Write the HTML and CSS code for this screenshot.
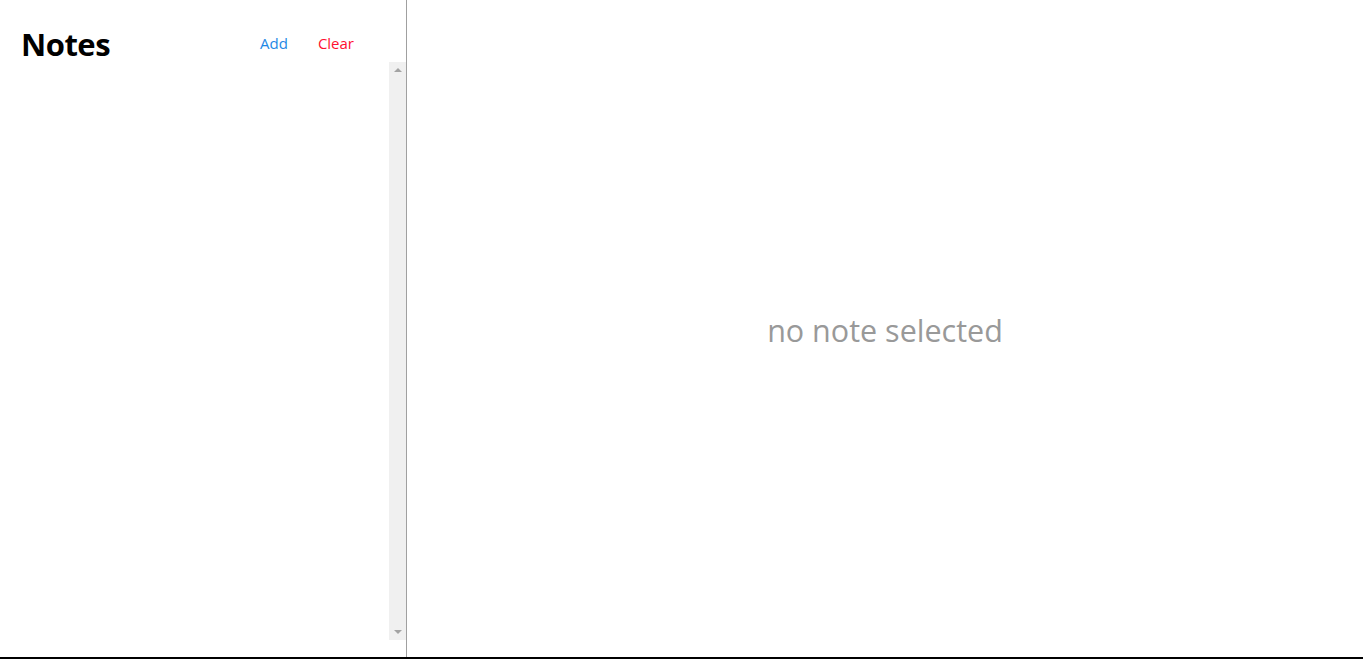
FILE: index.html
```html
<!DOCTYPE html>
<html>
<head>
<meta charset="utf-8">
<link rel="stylesheet" href="styles.css">
</head>
<body>
<div class="app">
  <aside class="sidebar">
    <header class="side-header">
      <h1 class="title">Notes</h1>
      <div class="actions">
        <button class="btn btn-add">Add</button>
        <button class="btn btn-clear">Clear</button>
      </div>
    </header>
    <div class="list-wrap">
      <ul class="note-list"></ul>
      <div class="scrollbar">
        <span class="arrow arrow-up"></span>
        <span class="track"></span>
        <span class="arrow arrow-down"></span>
      </div>
    </div>
  </aside>
  <main class="main">
    <p class="empty">no note selected</p>
  </main>
</div>
</body>
</html>
```
FILE: styles.css
```css
html, body {
  margin: 0;
  padding: 0;
  height: 100%;
}
body {
  font-family: "Open Sans", "Noto Sans", sans-serif;
  background: #fff;
}
.app {
  display: flex;
  height: 659px;
  box-sizing: border-box;
  border-bottom: 2px solid #000;
}
.sidebar {
  width: 406px;
  border-right: 1px solid #a0a0a0;
  display: flex;
  flex-direction: column;
  padding-bottom: 17px;
  box-sizing: content-box;
}
.side-header {
  height: 62px;
  display: flex;
  align-items: center;
  justify-content: space-between;
  padding: 26px 52px 0 21px;
  box-sizing: border-box;
}
.title {
  margin: 0;
  font-size: 31px;
  font-weight: 700;
  letter-spacing: -0.5px;
  color: #000;
}
.actions {
  display: flex;
  gap: 30px;
  padding-bottom: 2px;
}
.btn {
  border: none;
  background: none;
  padding: 0;
  font-family: inherit;
  font-size: 15px;
  cursor: pointer;
}
.btn-add { color: #1e88e5; }
.btn-clear { color: #ff1030; }
.list-wrap {
  flex: 1;
  display: flex;
  min-height: 0;
}
.note-list {
  flex: 1;
  margin: 0;
  padding: 0;
  list-style: none;
}
.scrollbar {
  width: 17px;
  background: #f0f0f0;
  display: flex;
  flex-direction: column;
  align-items: center;
}
.track { flex: 1; }
.arrow {
  width: 0;
  height: 0;
  border-left: 4px solid transparent;
  border-right: 4px solid transparent;
}
.arrow-up {
  border-bottom: 4px solid #a3a3a3;
  margin-top: 6px;
  margin-bottom: 7px;
}
.arrow-down {
  border-top: 4px solid #a3a3a3;
  margin-top: 7px;
  margin-bottom: 6px;
}
.main {
  flex: 1;
  display: flex;
  align-items: center;
  justify-content: center;
}
.empty {
  margin: 0;
  font-size: 30.5px;
  color: #999;
  padding-top: 2px;
}
```
